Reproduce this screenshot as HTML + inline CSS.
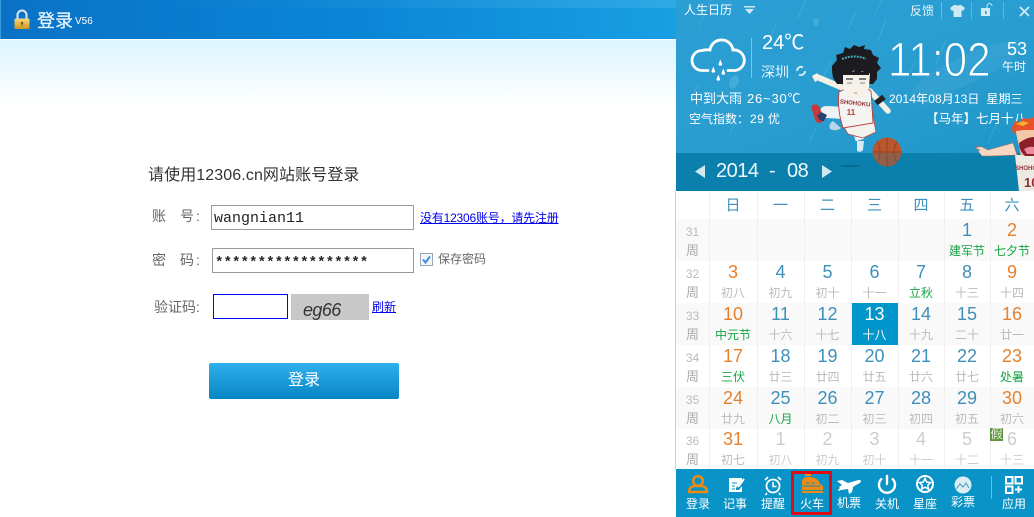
<!DOCTYPE html>
<html><head><meta charset="utf-8">
<style>
html,body{margin:0;padding:0;width:1034px;height:517px;overflow:hidden;background:#fff;font-family:"Liberation Sans","Noto Sans CJK SC",sans-serif}
#s{position:relative;width:1034px;height:517px;overflow:hidden}
.a{position:absolute;white-space:nowrap;line-height:1}
.hd{left:0;top:0;width:676px;height:39px;background:linear-gradient(90deg,#0a72c6 0%,#0a84d6 50%,#189fe2 100%)}
.hd2{left:170px;top:0;width:506px;height:8px;background:linear-gradient(90deg,rgba(255,255,255,0),rgba(255,255,255,.1))}
.gr{left:0;top:40px;width:676px;height:66px;background:linear-gradient(#dcf5ff,#fff)}
.lb{color:#666;font-size:14px}
.in{position:absolute;box-sizing:border-box;border:1px solid #999;background:#fff}
a{color:#00e;text-decoration:underline}
.panel{left:676px;top:0;width:358px;height:191px;background:linear-gradient(160deg,#2b9fd4 0%,#2a9dd0 50%,#1a93c6 100%)}
.bar{left:676px;top:153px;width:358px;height:38px;background:#0b80ad}
.w{color:#fff}
.cal{left:675px;top:191px;width:359px;height:278px;background:#fff;border-left:1px solid #ccc;box-sizing:border-box}
.r{position:absolute;left:676px;width:358px;height:42px}
.c{position:absolute;top:0;height:42px;text-align:center;color:#3f8fbb}
.c b{display:block;font-weight:400;font-size:18px;line-height:18px;margin-top:2px}
.c i{display:block;font-style:normal;font-size:12px;line-height:12px;margin-top:6px;color:#bbb}
.c1{left:33px;width:48px}.c2{left:81px;width:47px}.c3{left:128px;width:47px}.c4{left:175px;width:47px}.c5{left:222px;width:46px}.c6{left:268px;width:46px}.c7{left:314px;width:44px}
.wk{left:0;width:33px;color:#bbb}
.wk b{font-size:12px;margin-top:7px;line-height:12px;color:#bbb}
.wk i{margin-top:6px;font-size:13px;line-height:13px;color:#aaa}
.o{color:#e6802c}.o b{color:#e6802c}
.g i{color:#17a444}
.n b{color:#ccc}.n i{color:#ccc}
.h{position:absolute;top:191px;height:30px;line-height:30px;text-align:center;font-size:15px;color:#3f8fbb}
.sep{position:absolute;top:191px;width:1px;height:278px;background:#efefef}
.ft{left:676px;top:469px;width:358px;height:48px;background:#0a93c6}
.fl{position:absolute;top:498px;width:40px;text-align:center;font-size:12px;line-height:12px;color:#fff}
</style></head>
<body><div id="s">
<div class="a hd"></div><div class="a hd2"></div>
<div class="a" style="left:0;top:0;width:1px;height:39px;background:#3a9ae0"></div>
<div class="a gr"></div>
<svg class="a" style="left:12px;top:8px" width="20" height="22" viewBox="0 0 20 22">
<defs><linearGradient id="lk" x1="0" y1="0" x2="0" y2="1"><stop offset="0" stop-color="#f7dc7c"/><stop offset="1" stop-color="#cf9520"/></linearGradient></defs>
<path d="M5.5 11V7a4.5 4.5 0 0 1 9 0v4" fill="none" stroke="#dfe8f0" stroke-width="2"/>
<rect x="2.500" y="10.500" width="15" height="10.500" rx="1.500" fill="url(#lk)"/>
<circle cx="10" cy="15" r="1.300" fill="#7c5a12"/><rect x="9.500" y="15" width="1" height="3" fill="#7c5a12"/></svg>
<div class="a w" style="left:37px;top:12px;font-size:18px;color:#eaf6ff;-webkit-text-stroke:.2px #eaf6ff">登录</div>
<div class="a w" style="left:75px;top:17px;font-size:10px">V56</div>

<div class="a" style="left:148px;top:168px;font-size:16px;color:#333;letter-spacing:.1px">请使用12306.cn网站账号登录</div>
<div class="a lb" style="left:152px;top:209px">账</div><div class="a lb" style="left:180px;top:209px">号</div><div class="a lb" style="left:196px;top:209px">:</div>
<div class="in" style="left:211px;top:205px;width:203px;height:25px"></div>
<div class="a" style="left:214px;top:210px;font:15px 'Liberation Mono',monospace;color:#222">wangnian11</div>
<a class="a" style="left:420px;top:212px;font-size:12px;letter-spacing:-.2px" href="#">没有12306账号，请先注册</a>
<div class="a lb" style="left:152px;top:253px">密</div><div class="a lb" style="left:180px;top:253px">码</div><div class="a lb" style="left:196px;top:253px">:</div>
<div class="in" style="left:212px;top:248px;width:202px;height:25px"></div>
<div class="a" style="left:215px;top:255px;font:bold 14.200px 'Liberation Mono',monospace;color:#222">******************</div>
<svg class="a" style="left:420px;top:253px" width="13" height="13"><rect x=".5" y=".5" width="12" height="12" fill="#f4f6f8" stroke="#9aa7b5"/><path d="M3 6.500l2.500 3 4.500-6" fill="none" stroke="#3a8fe0" stroke-width="2"/></svg>
<div class="a" style="left:438px;top:253px;font-size:12px;color:#666">保存密码</div>
<div class="a lb" style="left:154px;top:300px">验证码:</div>
<div class="in" style="left:213px;top:294px;width:75px;height:25px;border-color:#00f"></div>
<div class="a" style="left:291px;top:294px;width:78px;height:26px;background:#c8c8c8"></div>
<div class="a" style="left:303px;top:300px;font:italic 18px 'Liberation Sans',sans-serif;color:#333;letter-spacing:-.6px">eg66</div>
<a class="a" style="left:372px;top:301px;font-size:12px" href="#">刷新</a>
<div class="a" style="left:209px;top:363px;width:190px;height:36px;border-radius:2px;background:linear-gradient(#2fb0ec,#0885c4);color:#fff;text-align:center;font-size:16px;line-height:36px">登录</div>

<div class="a panel"></div>
<div class="a bar"></div>
<svg class="a" style="left:676px;top:0" width="358" height="191" stroke="#fff" stroke-opacity=".1" stroke-width="1.200" fill="none">
<path d="M35 0l-12 26M130 0l-8 18M205 0l-6 14M270 40l-10 24M60 120l-6 14M155 60l-10 22M210 20l-8 20M240 60l-6 14M320 125l-8 18M100 25l-8 18M22 85l-6 12M180 12l-8 18M140 128l-6 12"/>
<ellipse cx="58" cy="82" rx="4.500" ry="7" transform="rotate(25 58 82)" fill="#6fc0e0" fill-opacity=".4" stroke="none"/>
<ellipse cx="140" cy="22" rx="3" ry="4" fill="#8fd0ea" fill-opacity=".25" stroke="none"/>
<ellipse cx="290" cy="70" rx="60" ry="14" transform="rotate(-25 290 70)" fill="#7fc8e8" fill-opacity=".13" stroke="none"/>
</svg>

<div class="a w" style="left:684px;top:4px;font-size:12px">人生日历</div>
<svg class="a" style="left:743px;top:5px" width="13" height="11"><path d="M1 1h11v1.500H1zM2 4h9l-4.500 5z" fill="#cfe8f4"/></svg>
<div class="a w" style="left:910px;top:5px;font-size:12px;color:#e4f3fa">反馈</div>
<div class="a" style="left:941px;top:2px;width:1px;height:17px;background:rgba(255,255,255,.3)"></div>
<svg class="a" style="left:950px;top:5px" width="15" height="12"><path d="M4 0h2.500a2 2 0 0 0 3 0H11l4 3-2 3-1.500-1V12h-8V5L2 6 0 3z" fill="#cfe9f5"/></svg>
<div class="a" style="left:971px;top:2px;width:1px;height:17px;background:rgba(255,255,255,.25)"></div>
<svg class="a" style="left:980px;top:3px" width="14" height="14"><rect x="1" y="5" width="9" height="8" fill="#cfe9f5"/><rect x="5" y="8" width="1.500" height="3" fill="#2a9dd0"/><path d="M7 5V3a2.500 2.500 0 0 1 5 0" fill="none" stroke="#cfe9f5"/></svg>
<div class="a" style="left:1003px;top:2px;width:1px;height:17px;background:rgba(255,255,255,.25)"></div>
<svg class="a" style="left:1019px;top:6px" width="11" height="11"><path d="M1 1l9 9M10 1l-9 9" stroke="#cfe9f5" stroke-width="1.800"/></svg>

<svg class="a" style="left:689px;top:36px" width="60" height="48" viewBox="0 0 60 48" fill="none">
<path d="M19 34.500H13A10 10 0 0 1 13 14.500Q17 13.500 21 14A11.600 11.600 0 0 1 44 14A10 10 0 0 1 46 34.500H39" stroke="#fff" stroke-width="2.800" stroke-linecap="round"/>
<path d="M29.500 28l1.800-4.500 1.800 4.500a1.800 1.800 0 0 1-3.600 0zM22.500 35l1.800-4.500 1.800 4.500a1.800 1.800 0 0 1-3.600 0zM32.500 37l1.800-4.500 1.800 4.500a1.800 1.800 0 0 1-3.600 0zM27.500 43l1.800-4.500 1.800 4.500a1.800 1.800 0 0 1-3.600 0z" fill="#fff"/>
</svg>
<div class="a" style="left:751px;top:38px;width:1px;height:40px;background:rgba(255,255,255,.4)"></div>
<div class="a w" style="left:762px;top:33px;font-size:20px">24℃</div>
<div class="a w" style="left:761px;top:65px;font-size:14px;color:#e4f3fa">深圳</div>
<svg class="a" style="left:795px;top:65px" width="12" height="12" fill="none" stroke="#cfe8f4" stroke-width="2"><path d="M2 6a4 4 0 0 1 6-3.500M10 6a4 4 0 0 1-6 3.500"/></svg>
<div class="a w" style="left:690px;top:92px;font-size:13px">中到大雨</div>
<div class="a w" style="left:747px;top:92px;font-size:13px;letter-spacing:.8px">26~30℃</div>
<div class="a w" style="left:689px;top:113px;font-size:12px">空气指数：</div>
<div class="a w" style="left:750px;top:113px;font-size:12px;letter-spacing:.4px">29 优</div>

<div class="a" style="left:888px;top:37px;font-size:48px;color:#fff;-webkit-text-stroke:1.100px #2b9cd0;transform:scaleX(.88);transform-origin:0 0">11:02</div>
<div class="a w" style="left:1007px;top:40px;font-size:18px">53</div>
<div class="a w" style="left:1002px;top:61px;font-size:12px">午时</div>
<div class="a w" style="left:889px;top:93px;font-size:12px;letter-spacing:.1px">2014年08月13日&nbsp; 星期三</div>
<div class="a w" style="left:926px;top:113px;font-size:12.500px">【马年】七月十八</div>

<svg class="a" style="left:676px;top:0" width="358" height="191" viewBox="676 0 358 191">
<!-- basketball -->
<circle cx="887" cy="152" r="14.500" fill="#b9562f"/>
<path d="M873 152h29M887 138v29M877 141q6 11 0 22M897 141q-6 11 0 22" stroke="#7e3418" fill="none" stroke-opacity=".6"/>
<rect x="872" y="153" width="30" height="14" fill="#0b80ad" opacity=".22"/>
<ellipse cx="850" cy="166" rx="10" ry="1" fill="#06688e"/>
<!-- left leg -->
<path d="M846 113 L826 112" stroke="#eef2f2" stroke-width="12" stroke-linecap="round"/>
<path d="M811 106q6-4 9 2l4 12q-5 6-9 0z" fill="#c73a3a"/>
<path d="M817 116q3 6 7 5l3-6-6-3z" fill="#2c3f70"/>
<path d="M833 121q-5 3-3 8 6 3 11-1z" fill="#b5d6e8"/>
<!-- right leg -->
<path d="M857 130l3 10" stroke="#eef2f2" stroke-width="9"/>
<path d="M855 136h10" stroke="#c5483e" stroke-width="1.500"/>
<path d="M857 141h7l-1 9q-2 3-6 1z" fill="#d9ebf0"/>
<!-- shorts -->
<path d="M842 112l30-2 4 22-13 6-15-4q-7-10-6-22z" fill="#f2f2ee" stroke="#c5483e" stroke-width=".8"/>
<!-- arms -->
<path d="M817 77l26 11" stroke="#f4f0e6" stroke-width="6" stroke-linecap="round"/>
<path d="M812 76l5-3 3 6-5 3z" fill="#f4f0e6"/>
<path d="M870 91l18 20" stroke="#f4f0e6" stroke-width="5.500" stroke-linecap="round"/>
<path d="M876 103l8-6" stroke="#222" stroke-width="5.500"/>
<!-- jersey -->
<path d="M839 92l6-3 4 7h13l4-8 5 3 2 32-30 5q-6-18-4-36z" fill="#f4f4f2" stroke="#bf3d3a" stroke-width=".9"/>
<text x="855" y="105" font-size="6" font-weight="700" text-anchor="middle" fill="#8c3030" transform="rotate(6 855 105)">SHOHOKU</text>
<text x="851" y="115" font-size="8" font-weight="700" text-anchor="middle" fill="#b83a36">11</text>
<!-- hair -->
<path d="M832 66l5-6-1-5 7-2 2-6 5 2 4-4 5 2 6-2-1 4 7 1 2 5 6 3-2 5 4 5-4 4 0 7-4 5-36 0-4-6-1-7z" fill="#1c1c20"/>
<!-- face -->
<path d="M843 74l13-4 14 3-1 15q-5 10-13 10-10 0-13-10z" fill="#f6f2ea"/>
<path d="M843 72l7-4 3 4 5-4 4 4 8-2-1 5-36 0z" fill="#1c1c20"/>
<path d="M842 59q13-5 24 0" stroke="#3fa8b8" stroke-width="2" fill="none" stroke-dasharray="2 1"/>
<path d="M846 79h7M859 79h7" stroke="#555" stroke-width="1.500"/>
<path d="M847 83h5M860 83h5" stroke="#888"/>
<path d="M854 93h3" stroke="#999"/>
<!-- right character -->
<path d="M975 146l7 1 6 3 25-7 4 12-26 1-9 0-4-5 2-1-5-2 4-1z" fill="#f5d7c2" stroke="#b06a5a" stroke-width=".5"/>
<path d="M1015 155h19v36h-15z" fill="#efe9e3"/>
<text x="1015" y="170" font-size="6" font-weight="700" fill="#8a3a3a">SHOHO</text>
<text x="1024" y="187" font-size="13" font-weight="700" fill="#8a3030">10</text>
<path d="M1015 128h19v28h-13z" fill="#f5c9a8"/>
<path d="M1012 127l3-6 5 1 3-4 5 1 6-2v13l-10 0-8 1-3 4z" fill="#e8512a"/>
<path d="M1016 124l7-3 6 2-6 3z" fill="#f5b030"/>
<path d="M1019 143q8-6 15-6v19h-9q-6-5-6-13z" fill="#8c1f2a"/>
<path d="M1024 149q5-3 10-2v7h-7z" fill="#ee8aa0"/>
</svg>

<svg class="a" style="left:695px;top:165px" width="11" height="13"><path d="M10 0v13L0 6.500z" fill="#cfe8f2"/></svg>
<div class="a" style="left:716px;top:161px;font-size:20px;letter-spacing:-.5px;color:#eef8fc">2014</div>
<div class="a" style="left:769px;top:161px;font-size:20px;color:#eef8fc">-</div>
<div class="a" style="left:787px;top:161px;font-size:20px;letter-spacing:-.5px;color:#eef8fc">08</div>
<svg class="a" style="left:822px;top:165px" width="11" height="13"><path d="M0 0v13l10-6.500z" fill="#cfe8f2"/></svg>

<div class="a cal"></div>
<div class="r" style="top:219px;background:#f9f9f9"></div>
<div class="r" style="top:303px;background:#f9f9f9"></div>
<div class="r" style="top:387px;background:#f9f9f9"></div>
<div class="a" style="left:852px;top:303px;width:46px;height:42px;background:#0096cc"></div>
<div class="sep" style="left:709px"></div><div class="sep" style="left:757px"></div><div class="sep" style="left:804px"></div><div class="sep" style="left:851px"></div><div class="sep" style="left:898px"></div><div class="sep" style="left:944px"></div><div class="sep" style="left:990px"></div>
<div class="h" style="left:709px;width:48px">日</div><div class="h" style="left:757px;width:47px">一</div><div class="h" style="left:804px;width:47px">二</div><div class="h" style="left:851px;width:47px">三</div><div class="h" style="left:898px;width:46px">四</div><div class="h" style="left:944px;width:46px">五</div><div class="h" style="left:990px;width:44px">六</div>

<div class="r" style="top:219px">
<div class="c wk"><b>31</b><i>周</i></div>
<div class="c c6 g"><b>1</b><i>建军节</i></div><div class="c c7 o g"><b>2</b><i>七夕节</i></div></div>
<div class="r" style="top:261px">
<div class="c wk"><b>32</b><i>周</i></div>
<div class="c c1 o"><b>3</b><i>初八</i></div><div class="c c2"><b>4</b><i>初九</i></div><div class="c c3"><b>5</b><i>初十</i></div><div class="c c4"><b>6</b><i>十一</i></div><div class="c c5 g"><b>7</b><i>立秋</i></div><div class="c c6"><b>8</b><i>十三</i></div><div class="c c7 o"><b>9</b><i>十四</i></div></div>
<div class="r" style="top:303px">
<div class="c wk"><b>33</b><i>周</i></div>
<div class="c c1 o g"><b>10</b><i>中元节</i></div><div class="c c2"><b>11</b><i>十六</i></div><div class="c c3"><b>12</b><i>十七</i></div><div class="c c4" style="color:#fff"><b>13</b><i style="color:#fff">十八</i></div><div class="c c5"><b>14</b><i>十九</i></div><div class="c c6"><b>15</b><i>二十</i></div><div class="c c7 o"><b>16</b><i>廿一</i></div></div>
<div class="r" style="top:345px">
<div class="c wk"><b>34</b><i>周</i></div>
<div class="c c1 o g"><b>17</b><i>三伏</i></div><div class="c c2"><b>18</b><i>廿三</i></div><div class="c c3"><b>19</b><i>廿四</i></div><div class="c c4"><b>20</b><i>廿五</i></div><div class="c c5"><b>21</b><i>廿六</i></div><div class="c c6"><b>22</b><i>廿七</i></div><div class="c c7 o g"><b>23</b><i>处暑</i></div></div>
<div class="r" style="top:387px">
<div class="c wk"><b>35</b><i>周</i></div>
<div class="c c1 o"><b>24</b><i>廿九</i></div><div class="c c2 g"><b>25</b><i>八月</i></div><div class="c c3"><b>26</b><i>初二</i></div><div class="c c4"><b>27</b><i>初三</i></div><div class="c c5"><b>28</b><i>初四</i></div><div class="c c6"><b>29</b><i>初五</i></div><div class="c c7 o"><b>30</b><i>初六</i></div></div>
<div class="r" style="top:428px">
<div class="c wk"><b>36</b><i>周</i></div>
<div class="c c1 o"><b>31</b><i>初七</i></div><div class="c c2 n"><b>1</b><i>初八</i></div><div class="c c3 n"><b>2</b><i>初九</i></div><div class="c c4 n"><b>3</b><i>初十</i></div><div class="c c5 n"><b>4</b><i>十一</i></div><div class="c c6 n"><b>5</b><i>十二</i></div><div class="c c7 n"><b>6</b><i>十三</i></div></div>
<div class="a" style="left:990px;top:428px;width:13px;height:13px;background:#5f9440;color:#e8f2e0;font-size:12px;line-height:13px;text-align:center">假</div>

<div class="a ft"></div>
<svg class="a" style="left:676px;top:469px" width="358" height="48" viewBox="676 469 358 48" fill="none">
<circle cx="698" cy="481" r="4.800" stroke="#f08a10" stroke-width="2.400"/>
<path d="M689 492q0-5 5-6h8q5 1 5 6z" stroke="#f08a10" stroke-width="2.400"/>
<path d="M729 478h13v3l-3 3-3 4 0 2 3 0 3-4v6h-13z" fill="#fff"/>
<path d="M732 483h5M732 486h3M732 489h3" stroke="#0a93c6"/>
<path d="M738 487l6-8" stroke="#fff" stroke-width="2"/>
<circle cx="773" cy="486" r="6.500" stroke="#fff" stroke-width="1.800"/>
<path d="M773 482v4.500h3.500M765 480l3-3M781 480l-3-3M767 493l-1.500 2M779 493l1.500 2" stroke="#fff" stroke-width="1.600"/>
<path d="M802 481q1-4 6-4h3q7 1 9 7l3 2v4h-21z" fill="#f08a10"/>
<path d="M804 475h8M806 483h3M811 483h4" stroke="#0a93c6"/>
<path d="M802 491h21v2h-21zM805 474h6v2h-6z" fill="#f08a10"/>
<path d="M802 486h18" stroke="#0a93c6"/>
<path d="M837 481l5-1 6 3 7-2q6-2 6 0 0 2-5 4l-3 2-1 5-3 2-1-5-7 1-2 1-1-1 2-2-1-1 3-2z" fill="#fff"/>
<path d="M887 476v8" stroke="#fff" stroke-width="2.400" stroke-linecap="round"/>
<path d="M882 478.500a8 8 0 1 0 10 0" stroke="#fff" stroke-width="2.400"/>
<circle cx="925" cy="484" r="8" stroke="#fff" stroke-width="2"/>
<path d="M925 478.500l1.700 3.600 3.900.5-2.900 2.700.8 3.900-3.500-2-3.500 2 .8-3.900-2.900-2.700 3.900-.5z" stroke="#fff" stroke-width="1.500"/>
<circle cx="963" cy="485" r="8.500" fill="#dcedf4"/>
<path d="M956 489l4-5 3 3 3-4 3 5" stroke="#3f9dc2"/>
<path d="M991.500 476v23" stroke="#fff" stroke-opacity=".4"/>
<path d="M1006 477h6.500v6.500h-6.500zM1015.500 477h6.500v6.500h-6.500zM1006 486.500h6.500v6.500h-6.500z" stroke="#fff" stroke-width="2"/>
<path d="M1018.500 486v7M1015 489.500h7" stroke="#fff" stroke-width="2"/>
</svg>
<div class="fl" style="left:678px">登录</div><div class="fl" style="left:715px">记事</div><div class="fl" style="left:753px">提醒</div><div class="fl" style="left:792px">火车</div><div class="fl" style="left:829px;top:497px">机票</div><div class="fl" style="left:867px">关机</div><div class="fl" style="left:905px">星座</div><div class="fl" style="left:943px;top:496px">彩票</div><div class="fl" style="left:994px">应用</div>
<div class="a" style="left:791px;top:471px;width:41px;height:44px;box-sizing:border-box;border:3px solid #e00a14"></div>
</div></body></html>
